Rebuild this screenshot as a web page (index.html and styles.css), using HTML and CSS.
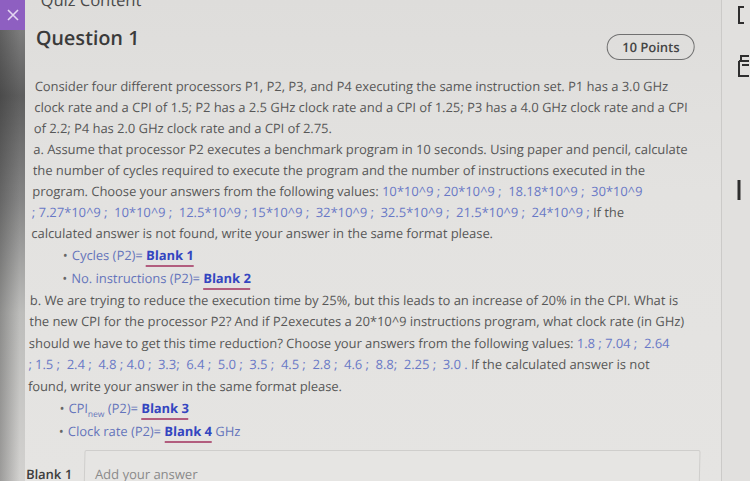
FILE: index.html
```html
<!DOCTYPE html>
<html lang="en">
<head>
<meta charset="utf-8">
<title>Quiz Content</title>
<link rel="stylesheet" href="styles.css">
</head>
<body>
<div class="page">
  <aside class="rail">
    <div class="close">
      <svg width="14" height="14" viewBox="0 0 14 14"><path d="M2 2 L12 12 M12 2 L2 12" stroke="#e4d6f2" stroke-width="1.6" fill="none"/></svg>
    </div>
  </aside>
  <main class="main">
    <div class="sheet">
      <div class="crumb">Quiz Content</div>
      <div class="qhead">
        <h1 class="qtitle">Question 1</h1>
        <span class="pts">10 Points</span>
      </div>
      <div class="qbody">
        <div class="ln">Consider four different processors P1, P2, P3, and P4 executing the same instruction set. P1 has a 3.0 GHz</div>
        <div class="ln">clock rate and a CPI of 1.5; P2 has a 2.5 GHz clock rate and a CPI of 1.25; P3 has a 4.0 GHz clock rate and a CPI</div>
        <div class="ln">of 2.2; P4 has 2.0 GHz clock rate and a CPI of 2.75.</div>
        <div class="ln">a. Assume that processor P2 executes a benchmark program in 10 seconds. Using paper and pencil, calculate</div>
        <div class="ln">the number of cycles required to execute the program and the number of instructions executed in the</div>
        <div class="ln">program. Choose your answers from the following values: <span class="val">10*10^9 ; 20*10^9 ;&nbsp; 18.18*10^9 ;&nbsp; 30*10^9</span></div>
        <div class="ln"><span class="val">; 7.27*10^9 ;&nbsp; 10*10^9 ;&nbsp; 12.5*10^9 ; 15*10^9 ;&nbsp; 32*10^9 ;&nbsp; 32.5*10^9 ;&nbsp; 21.5*10^9 ;&nbsp; 24*10^9 ;</span> If the</div>
        <div class="ln">calculated answer is not found, write your answer in the same format please.</div>
        <ul class="blanks">
          <li>Cycles (P2)= <span class="blank">Blank 1</span></li>
          <li>No. instructions (P2)= <span class="blank">Blank 2</span></li>
        </ul>
        <div class="part-b">
          <div class="ln">b. We are trying to reduce the execution time by 25%, but this leads to an increase of 20% in the CPI. What is</div>
          <div class="ln">the new CPI for the processor P2? And if P2executes a 20*10^9 instructions program, what clock rate (in GHz)</div>
          <div class="ln">should we have to get this time reduction? Choose your answers from the following values: <span class="val">1.8 ; 7.04 ;&nbsp; 2.64</span></div>
          <div class="ln"><span class="val">; 1.5 ;&nbsp; 2.4 ;&nbsp; 4.8 ; 4.0 ;&nbsp; 3.3;&nbsp; 6.4 ;&nbsp; 5.0 ;&nbsp; 3.5 ;&nbsp; 4.5 ;&nbsp; 2.8 ;&nbsp; 4.6 ;&nbsp; 8.8;&nbsp; 2.25 ;&nbsp; 3.0 .</span> If the calculated answer is not</div>
          <div class="ln">found, write your answer in the same format please.</div>
        </div>
        <ul class="blanks second">
          <li>CPI<sub>new</sub> (P2)= <span class="blank">Blank 3</span></li>
          <li>Clock rate (P2)= <span class="blank">Blank 4</span> GHz</li>
        </ul>
      </div>
      <div class="answer">
        <span class="alabel">Blank 1</span>
        <div class="ainput">Add your answer</div>
      </div>
    </div>
  </main>
  <aside class="side">
    <svg class="ic ic1" width="14" height="20" viewBox="0 0 14 20"><path d="M9 3 H4 V19 H9" stroke="#2e2e2e" stroke-width="2" fill="none"/></svg>
    <svg class="ic ic2" width="14" height="24" viewBox="0 0 14 24"><path d="M5 6 V2 H13 M3 7 H13 M3 7 V22 H13 M6 11 H13" stroke="#2e2e2e" stroke-width="2" fill="none"/></svg>
    <svg class="ic ic3" width="14" height="22" viewBox="0 0 14 22"><path d="M3 1 V21" stroke="#2e2e2e" stroke-width="3" fill="none"/></svg>
  </aside>
</div>
</body>
</html>
```

FILE: styles.css
```css
html, body {
  margin: 0;
  padding: 0;
}
body {
  width: 750px;
  height: 481px;
  overflow: hidden;
  background: #e2e1df;
  font-family: "Open Sans", "Noto Sans", sans-serif;
  color: #575757;
}
.page {
  display: flex;
  width: 750px;
  height: 481px;
}
.rail {
  width: 25px;
  flex: none;
  background: linear-gradient(to right, rgba(30,30,30,0.30), rgba(255,255,255,0) 80%),
              linear-gradient(to bottom, #8a8a8a 0, #5e5e5e 20%, #868686 42%, #bdbdbb 65%, #d3d2d0 100%);
}
.close {
  width: 25px;
  height: 30px;
  background: #8e5fc1;
  display: flex;
  align-items: center;
  justify-content: center;
}
.main {
  width: 696px;
  flex: none;
  border-right: 1px solid #cbcac8;
  background: linear-gradient(to bottom, #dedddb 0, #e3e2e0 40%, #e5e4e2 100%);
  overflow: hidden;
}
.sheet {
  padding: 0 25px 0 12px;
  transform: skewX(-1.3deg);
  transform-origin: 0 0;
}
.crumb {
  font-size: 16.5px;
  line-height: 22px;
  margin-top: -11px;
  padding-left: 4px;
  color: #4a4a4a;
}
.qhead {
  display: flex;
  justify-content: space-between;
  align-items: flex-start;
  margin-top: 15px;
}
.qtitle {
  margin: 0;
  font-size: 19.8px;
  line-height: 24px;
  font-weight: 600;
  color: #3a3a3a;
}
.pts {
  margin-top: 8px;
  height: 24px;
  padding: 0 14px;
  border: 1px solid #707070;
  border-radius: 13px;
  font-size: 13px;
  font-weight: 600;
  line-height: 24px;
  color: #454545;
}
.qbody {
  margin-top: 16px;
  font-size: 12.9px;
}
.ln {
  white-space: nowrap;
  line-height: 21px;
}
.part-b .ln {
  line-height: 21.4px;
}
.val {
  color: #6878c6;
}
.blanks {
  list-style: none;
  margin: 0;
  padding: 0 0 0 32px;
}
.blanks li {
  line-height: 23px;
  white-space: nowrap;
  color: #6474bb;
}
.blanks li::before {
  content: "\2022";
  display: inline-block;
  width: 9px;
  color: #666;
}
.blanks sub {
  font-size: 8.5px;
  line-height: 0;
}
.blank {
  color: #3345c0;
  font-weight: 700;
  border-bottom: 2px solid #b25d7e;
  padding-bottom: 1px;
}
.answer {
  display: flex;
  align-items: flex-start;
  margin-top: 7px;
}
.alabel {
  width: 58px;
  flex: none;
  padding-top: 15px;
  font-size: 13px;
  font-weight: 600;
  color: #3d3d3d;
}
.ainput {
  flex: 1;
  height: 44px;
  margin-right: -15px;
  border: 1px solid #cfcecc;
  border-radius: 2px;
  background: #e6e5e3;
  padding: 14px 10px 0;
  box-sizing: border-box;
  font-size: 13px;
  color: #8a8a8a;
}
.side {
  flex: 1;
  position: relative;
  background: #e1e0de;
}
.ic {
  position: absolute;
}
.ic1 { left: 13px; top: 4px; }
.ic2 { left: 14px; top: 54px; }
.ic3 { left: 14px; top: 179px; }
```
